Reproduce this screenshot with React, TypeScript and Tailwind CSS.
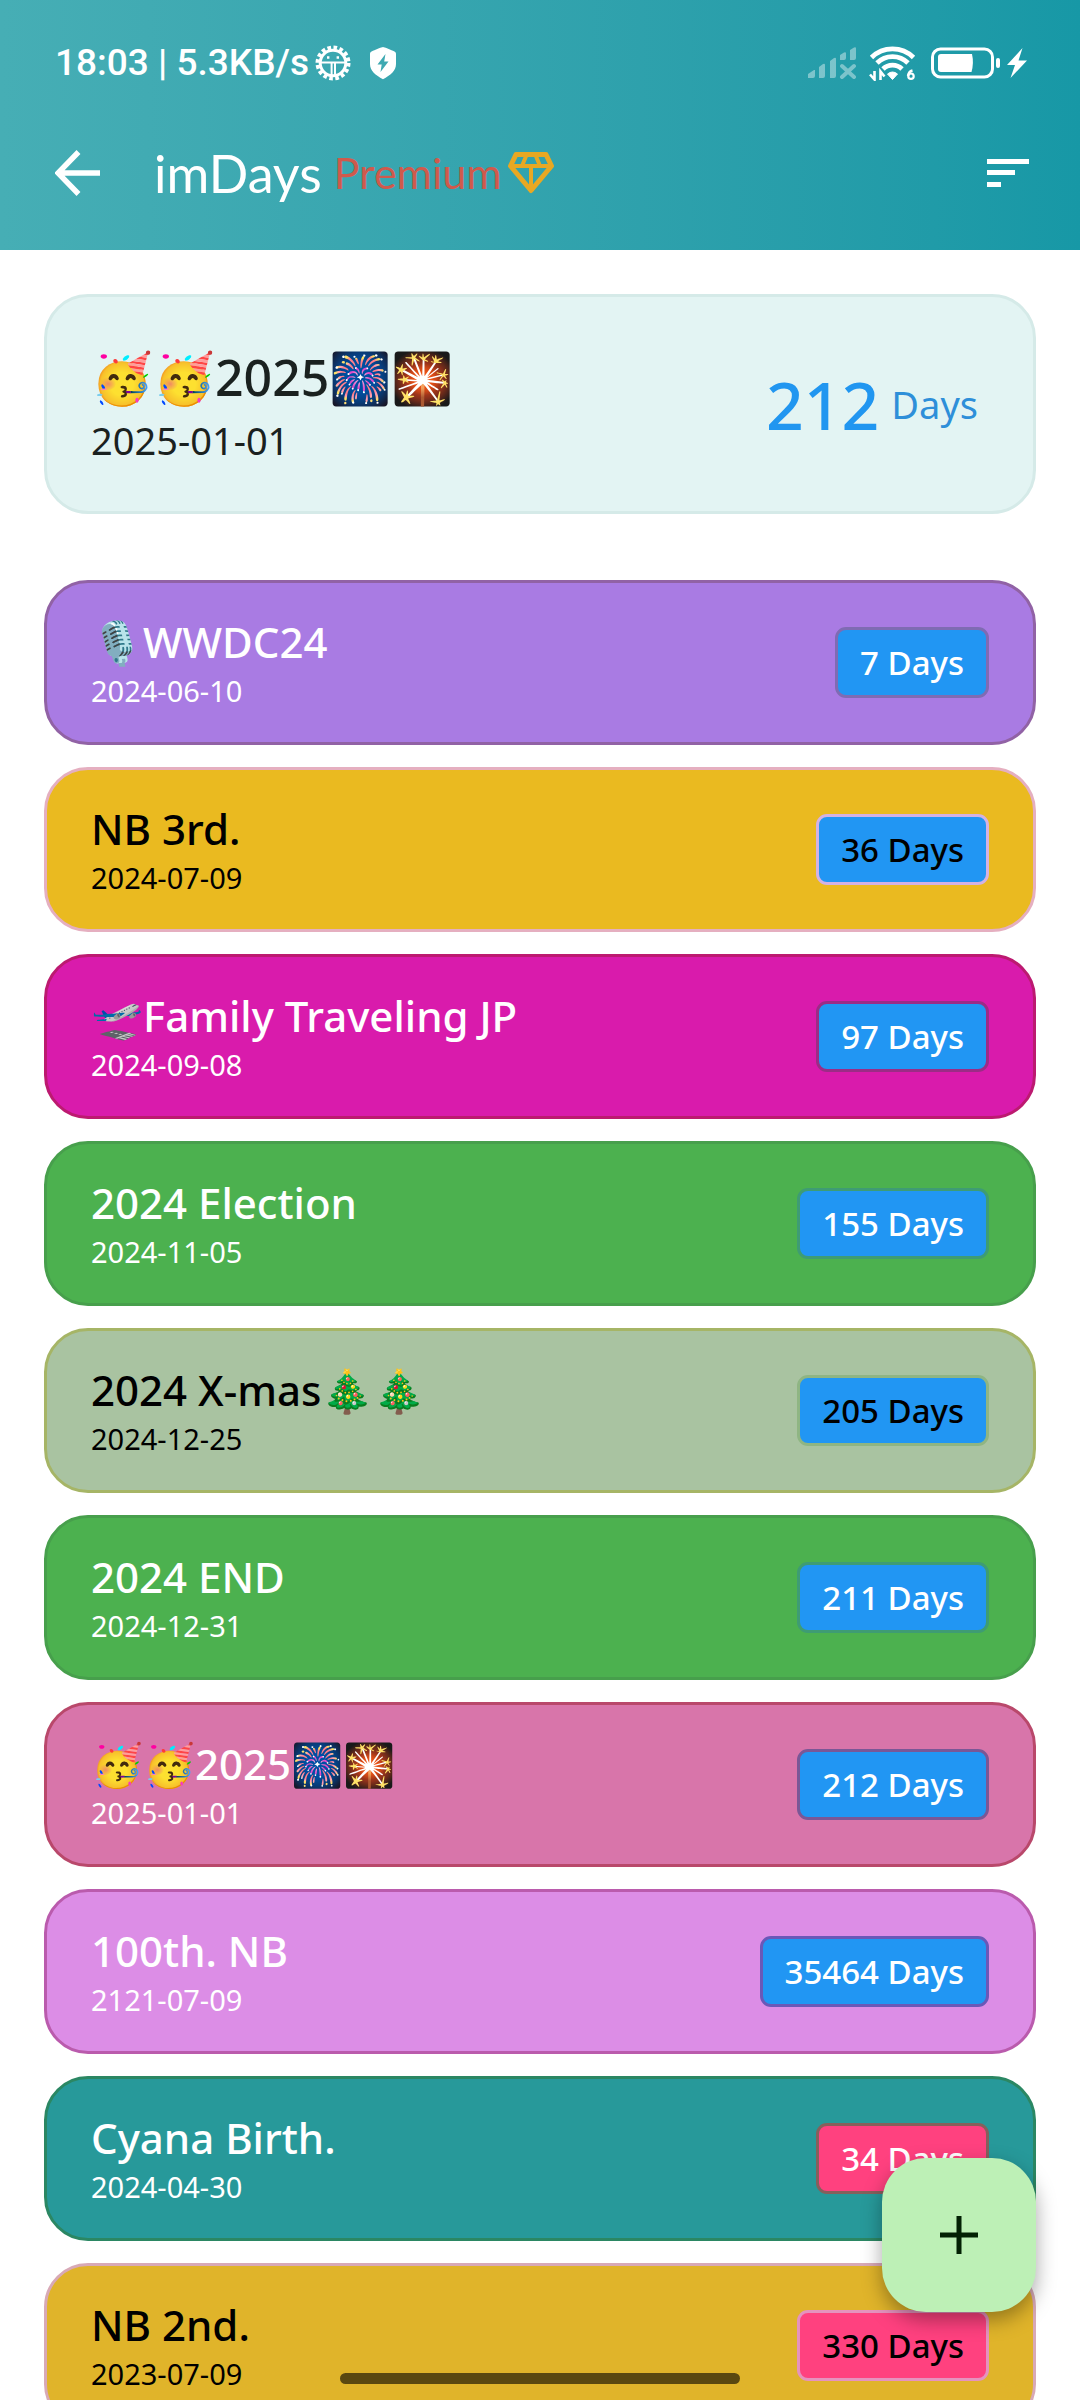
import React from 'react';

interface DayEvent {
  title: string;
  date: string;
  days: number;
  card: string;
  badge: string;
}

const events: DayEvent[] = [
  {
    title: '🎙️WWDC24',
    date: '2024-06-10',
    days: 7,
    card: 'bg-[#a97be3] border-[#9162a5] text-white',
    badge: 'bg-[#2196f3] border-[#7f6bb3]',
  },
  {
    title: 'NB 3rd.',
    date: '2024-07-09',
    days: 36,
    card: 'bg-[#eaba20] border-[#e5afc0] text-black',
    badge: 'bg-[#2196f3] border-[#d3b2e3]',
  },
  {
    title: '🛫Family Traveling JP',
    date: '2024-09-08',
    days: 97,
    card: 'bg-[#d91bac] border-[#bc1a70] text-white',
    badge: 'bg-[#2196f3] border-[#9b2c86]',
  },
  {
    title: '2024 Election',
    date: '2024-11-05',
    days: 155,
    card: 'bg-[#4cb14f] border-[#479f4c] text-white',
    badge: 'bg-[#2196f3] border-[#3e9c74]',
  },
  {
    title: '2024 X-mas🎄🎄',
    date: '2024-12-25',
    days: 205,
    card: 'bg-[#a9c3a1] border-[#a6b566] text-black',
    badge: 'bg-[#2196f3] border-[#8fb583]',
  },
  {
    title: '2024 END',
    date: '2024-12-31',
    days: 211,
    card: 'bg-[#4cb14f] border-[#479f4c] text-white',
    badge: 'bg-[#2196f3] border-[#3e9c74]',
  },
  {
    title: '🥳🥳2025🎆🎇',
    date: '2025-01-01',
    days: 212,
    card: 'bg-[#d875aa] border-[#b9486b] text-white',
    badge: 'bg-[#2196f3] border-[#7a5796]',
  },
  {
    title: '100th. NB',
    date: '2121-07-09',
    days: 35464,
    card: 'bg-[#dc8de6] border-[#ba5bad] text-white',
    badge: 'bg-[#2196f3] border-[#6a58b8]',
  },
  {
    title: 'Cyana Birth.',
    date: '2024-04-30',
    days: 34,
    card: 'bg-[#27999a] border-[#2b8763] text-white',
    badge: 'bg-[#ff417f] border-[#85605c]',
  },
  {
    title: 'NB 2nd.',
    date: '2023-07-09',
    days: 330,
    card: 'bg-[#e0b42a] border-[#d8a9b6] text-black',
    badge: 'bg-[#ff417f] border-[#e593be]',
  },
];

const StatusBar: React.FC = () => (
  <div className="flex h-[126px] items-center justify-between pl-[55px] pr-[53px] text-white">
    <div className="flex items-center">
      <span className="font-[Roboto,sans-serif] text-[37px] font-medium leading-[44px]">18:03 | 5.3KB/s</span>
      <svg className="ml-[6px] h-[36px] w-[36px]" viewBox="0 0 36 36" fill="none" stroke="currentColor">
        <circle cx="18" cy="18" r="15.5" strokeWidth="4" strokeDasharray="3.6 2.49" />
        <circle cx="18" cy="18" r="12.8" strokeWidth="3" />
        <path d="M5 17.500h26M16.600 18v12M20 18v12" strokeWidth="2" />
        <path d="M12 12.500h2.400M21.600 12.500H24" strokeWidth="2.400" />
      </svg>
      <svg className="ml-[18px] h-[34px] w-[28px]" viewBox="0 0 28 34">
        <path
          d="M14 1c1 0 9 3.400 11 4.300 1.200.500 2 1.300 2 2.700v10c0 7-5.500 11-13 15.200C6.500 29 1 25 1 18V8c0-1.400.800-2.200 2-2.700C5 4.400 13 1 14 1z"
          fill="currentColor"
        />
        <path d="M16.500 8 8.500 18.500h4.200L11.500 26l8-10.500h-4.300z" fill="#3ea9b2" />
      </svg>
    </div>
    <div className="flex items-center">
      <svg className="h-[32px] w-[49px] opacity-40" viewBox="0 0 49 32" fill="currentColor">
        <path d="M0 31v-4l6-4h1v6q0 2-2 2zM11 31V20l4-3q2-1 2 1v11q0 2-2 2zM22 31V14l4-3q2-1 2 1v17q0 2-2 2z" />
        <path d="M32 13V8l4-2.500q2-1 2 1V11q0 2-2 2zM42 13V3l4-2.500q2-1 2 1V11q0 2-2 2z" />
        <path d="M34 19l12 11M46 19 34 30" fill="none" stroke="currentColor" strokeWidth="4" strokeLinecap="round" />
      </svg>
      <svg className="ml-3 h-[36px] w-[48px]" viewBox="0 0 48 36" fill="none" stroke="currentColor">
        <path d="M2.500 12.500a30 30 0 0 1 42 0M8 18a22 22 0 0 1 31 0M14 24a13.500 13.500 0 0 1 19 0" strokeWidth="4.800" />
        <path d="M18.500 29q5-4 10 0l-5 5.500z" fill="currentColor" strokeWidth="1" />
        <path d="M5.500 26v8.500L1 29.500M11.500 35v-8.500l4 5" strokeWidth="2.600" />
        <path d="M43.500 25.500q-4 1-4.500 5.500" strokeWidth="2.400" />
        <circle cx="42" cy="31.200" r="2.700" strokeWidth="2.200" />
      </svg>
      <svg className="ml-[14px] h-[32px] w-[70px]" viewBox="0 0 70 32">
        <rect x="1.500" y="2" width="60" height="28" rx="8" fill="none" stroke="currentColor" strokeWidth="3" />
        <path d="M10 7h31q2 9-.5 18H10q-3 0-3-3V10q0-3 3-3z" fill="currentColor" />
        <rect x="65" y="11" width="4" height="10" rx="2" fill="currentColor" />
      </svg>
      <svg className="ml-[6px] h-[30px] w-[20px]" viewBox="0 0 20 30" fill="currentColor">
        <path d="M15.500 0 0 17h8L3.500 30 20 12.500h-8.500z" />
      </svg>
    </div>
  </div>
);

const AppBar: React.FC = () => (
  <div className="flex h-[94px] items-center justify-between pl-[55px] pr-[51px] text-white">
    <div className="flex items-center">
      <button aria-label="Back">
        <svg className="h-[46px] w-[45px]" viewBox="0 0 45 46" fill="none" stroke="currentColor" strokeWidth="5.500">
          <path d="M23.500 2 3 23l20.500 21M3.500 23H45" />
        </svg>
      </button>
      <h1 className="ml-[54px] font-[Lato,sans-serif] text-[52px] leading-[60px]">imDays</h1>
      <span className="ml-3 font-[Lato,sans-serif] text-[43px] leading-[60px] text-[#cf5a4c]">Premium</span>
      <svg className="ml-[6px] h-[42px] w-[46px]" viewBox="0 0 46 42" fill="none" stroke="#e8a823" strokeWidth="5">
        <path d="M8 2.500h30l5.500 11.500L23 38.500 2.500 14z" strokeLinejoin="round" />
        <path d="M2 14h42M18.500 3l-4.500 11M27.500 3l4.500 11M23 14v24" strokeWidth="4" />
      </svg>
    </div>
    <button aria-label="Sort">
      <svg className="h-[30px] w-[42px]" viewBox="0 0 42 30" fill="currentColor">
        <path d="M0 1h42v5H0zM0 12h28v5H0zM0 24h14v5H0z" />
      </svg>
    </button>
  </div>
);

const EventCard: React.FC<{ event: DayEvent }> = ({ event }) => (
  <li className={`flex items-center justify-between rounded-[44px] border-[3px] px-11 py-[31px] ${event.card}`}>
    <div>
      <h2 className="text-[42px] font-medium leading-[56px]">{event.title}</h2>
      <p className="text-[29px] leading-[41px]">{event.date}</p>
    </div>
    <span className={`rounded-[11px] border-[3px] px-[22px] text-[33px] font-medium leading-[65px] ${event.badge}`}>
      {event.days} Days
    </span>
  </li>
);

export default function App() {
  return (
    <div className="flex h-screen flex-col overflow-hidden bg-white font-['Noto_Sans',sans-serif]">
      <header className="shrink-0 bg-linear-to-r from-[#46aeb5] to-[#1798a6] pb-[30px]">
        <StatusBar />
        <AppBar />
      </header>

      <main className="min-h-0 flex-1 overflow-y-auto px-11 pt-11 [scrollbar-width:none]">
        <section className="flex items-center justify-between rounded-[44px] border-[3px] border-[#d5eae8] bg-[#e3f4f3] py-11 pl-11 pr-[55px] text-[#1a211f]">
          <div>
            <h2 className="text-[50px] font-medium leading-[72px]">🥳🥳2025🎆🎇</h2>
            <p className="text-[38px] leading-[54px]">2025-01-01</p>
          </div>
          <p className="flex items-center gap-3">
            <span className="text-[66px] font-medium leading-[80px] text-[#2196f0]">212</span>
            <span className="text-[38px] leading-[56px] text-[#2e8fd9]">Days</span>
          </p>
        </section>

        <ul className="mt-[66px] flex flex-col gap-[22px]">
          {events.map((event) => (
            <EventCard key={event.title} event={event} />
          ))}
        </ul>
      </main>

      <button
        aria-label="Add event"
        className="fixed bottom-[88px] right-11 flex size-[154px] items-center justify-center rounded-[44px] bg-[#bdf0b6] text-[#032104] shadow-[0_8px_20px_rgba(0,0,0,0.35)]"
      >
        <svg className="size-[38px]" viewBox="0 0 38 38" fill="none" stroke="currentColor" strokeWidth="5">
          <path d="M19 0v38M0 19h38" />
        </svg>
      </button>
      <div className="fixed bottom-4 left-1/2 h-[11px] w-[400px] -translate-x-1/2 rounded-full bg-black/60" />
    </div>
  );
}
